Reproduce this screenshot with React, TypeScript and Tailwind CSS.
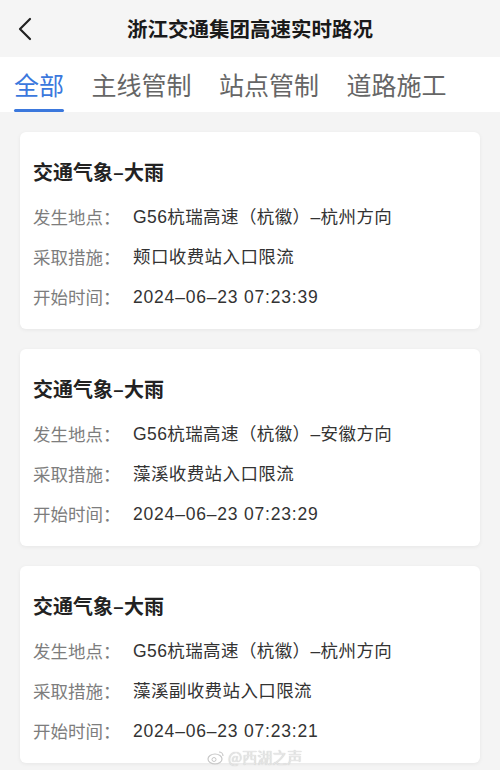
import React from "react";

const cards = [
  {
    title: "交通气象–大雨",
    place: "G56杭瑞高速（杭徽）–杭州方向",
    measure: "颊口收费站入口限流",
    time: "2024–06–23 07:23:39",
  },
  {
    title: "交通气象–大雨",
    place: "G56杭瑞高速（杭徽）–安徽方向",
    measure: "藻溪收费站入口限流",
    time: "2024–06–23 07:23:29",
  },
  {
    title: "交通气象–大雨",
    place: "G56杭瑞高速（杭徽）–杭州方向",
    measure: "藻溪副收费站入口限流",
    time: "2024–06–23 07:23:21",
  },
];

const tabs = ["全部", "主线管制", "站点管制", "道路施工"];

function Row({ label, value, wide }: { label: string; value: string; wide?: boolean }) {
  return (
    <div className="flex items-center h-[40px] text-[17.5px]">
      <span className="w-[100px] shrink-0 text-[#7d7d7d]">{label}</span>
      <span
        className={`text-[#333333] ${wide ? "tracking-[0.8px]" : "tracking-[0.4px]"}`}
        style={{ fontFamily: '"Liberation Sans", "Noto Sans CJK SC", sans-serif' }}
      >
        {value}
      </span>
    </div>
  );
}

export default function App() {
  return (
    <div
      className="relative w-[500px] h-[770px] bg-[#f4f4f4] overflow-hidden"
      style={{ fontFamily: '"Noto Sans CJK SC", "Noto Sans", sans-serif' }}
    >
      <div className="h-[57px] flex items-center bg-[#f5f5f5]">
        <div className="w-[60px] pl-[17px] flex items-center">
          <svg width="16" height="24" viewBox="0 0 16 24" fill="none">
            <path d="M13 2 L3 12 L13 22" stroke="#222" strokeWidth="2.2" strokeLinecap="round" strokeLinejoin="round" />
          </svg>
        </div>
        <div className="flex-1 text-center text-[20.5px] font-bold text-[#1a1a1a]">浙江交通集团高速实时路况</div>
        <div className="w-[60px]" />
      </div>
      <div className="h-[55px] bg-white flex pl-[14px] gap-[27.5px]">
        {tabs.map((t, i) => (
          <div key={t} className="flex flex-col justify-between">
            <div className={`pt-[10px] text-[25px] leading-[34px] ${i === 0 ? "text-[#3b78dd]" : "text-[#666666]"}`}>{t}</div>
            <div className={`h-[3px] rounded-full ${i === 0 ? "bg-[#3b78dd]" : "bg-transparent"}`} />
          </div>
        ))}
      </div>
      <div className="px-[20px] pt-[20px] flex flex-col gap-[20px]">
        {cards.map((c, i) => (
          <div key={i} className="bg-white rounded-[6px] shadow-[0_1px_4px_rgba(0,0,0,0.06)] px-[13px] pt-[26px] pb-[12px]">
            <div className="text-[20px] leading-[28px] font-bold text-[#222222] mb-[11px]">{c.title}</div>
            <Row label="发生地点：" value={c.place} />
            <Row label="采取措施：" value={c.measure} />
            <Row label="开始时间：" value={c.time} wide />
          </div>
        ))}
      </div>
      <div className="absolute left-[207px] top-[746px] flex items-center gap-[3px] text-[15px] text-[#e6e6e6] [text-shadow:0_0_1px_#bdbdbd]">
        <svg width="18" height="15" viewBox="0 0 18 15" fill="none">
          <ellipse cx="8" cy="9" rx="7" ry="5" stroke="#c8c8c8" strokeWidth="1.2" />
          <circle cx="7" cy="9.5" r="2" stroke="#c8c8c8" strokeWidth="1" />
          <path d="M12 2 A4 4 0 0 1 16 6" stroke="#c8c8c8" strokeWidth="1.2" />
        </svg>
        <span>@西湖之声</span>
      </div>
    </div>
  );
}
